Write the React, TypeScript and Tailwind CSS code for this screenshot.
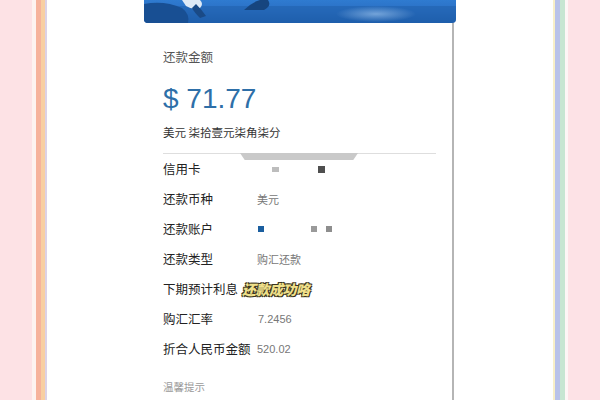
import React from "react";

const font = { fontFamily: '"Noto Sans CJK SC", "Noto Sans", sans-serif' };

function Row({ label, children }: { label: string; children?: React.ReactNode }) {
  return (
    <div className="flex h-[30px] shrink-0 items-center">
      <div className="w-[94px] shrink-0 text-[12.5px] text-[#222]">{label}</div>
      <div className="flex items-center text-[11px] text-[#777]">{children}</div>
    </div>
  );
}

export default function App() {
  return (
    <div className="flex h-[400px] w-[600px] overflow-hidden bg-[#fde3e6]" style={font}>
      <div className="w-[32px] shrink-0 bg-[#fde2e5]" />
      <div className="w-[4px] shrink-0 bg-[#fdf3f0]" />
      <div className="w-[5px] shrink-0 bg-[#f6b39c]" />
      <div className="w-[4px] shrink-0 bg-[#f8cfa2]" />
      <div className="w-[2px] shrink-0 bg-[#dcd2e6]" />
      <div className="flex w-[506px] shrink-0 bg-white pl-[97px]">
        <div className="flex h-[400px] w-[312px] flex-col overflow-hidden">
          <div className="relative h-[23px] w-[312px] shrink-0 overflow-hidden rounded-b-[4px] bg-gradient-to-b from-[#2f7bd0] via-[#2a6fc4] to-[#1e5fb0]">
            <svg className="absolute left-0 top-0" width="312" height="23" viewBox="0 0 312 23">
              <defs>
                <radialGradient id="hl" cx="0.5" cy="0.5" r="0.5">
                  <stop offset="0" stopColor="#a9cdf2" stopOpacity="0.6" />
                  <stop offset="1" stopColor="#a9cdf2" stopOpacity="0" />
                </radialGradient>
              </defs>
              <rect x="0" y="6" width="312" height="17" fill="#1d5ea8" opacity="0.5" />
              <path d="M0 4 Q20 0 38 8 Q46 14 44 23 L0 23 Z" fill="#184f93" />
              <path d="M38 0 L56 0 Q60 4 56 8 Q48 10 42 6 Z" fill="#dfeaf6" />
              <path d="M52 4 Q58 10 62 16 L56 18 Q50 12 48 8 Z" fill="#1a4a86" />
              <path d="M100 10 Q108 2 116 0 L124 0 Q128 6 120 10 Z" fill="#16457f" />
              <ellipse cx="232" cy="14" rx="40" ry="8" fill="url(#hl)" />
            </svg>
          </div>
          <div className="flex w-[310px] flex-1 flex-col border-r-[2px] border-[#b5b5b5] pl-[19px] pr-[16px]">
            <div className="mt-[25px] h-[18px] shrink-0 text-[12.5px] leading-[18px] text-[#555]">还款金额</div>
            <div
              className="mt-[16px] h-[34px] shrink-0 text-[28px] leading-[34px] text-[#2e6fa8]"
              style={{ fontFamily: '"Liberation Sans", Arial, sans-serif' }}
            >
              $ 71.77
            </div>
            <div className="mt-[8px] h-[16px] shrink-0 text-[11.5px] leading-[16px] text-[#333]">美元 柒拾壹元柒角柒分</div>
            <div className="relative mt-[13px] h-px shrink-0 bg-[#dedede]">
              <div className="absolute left-[77px] top-0 h-[7px] w-[118px] bg-[#c9c9c9] [clip-path:polygon(0_0,100%_0,96%_100%,4%_100%)]" />
            </div>
            <Row label="信用卡">
              <span className="ml-[15px] inline-block h-[5px] w-[7px] bg-[#bdbdbd]" />
              <span className="ml-[39px] inline-block h-[7px] w-[7px] bg-[#4f4f4f]" />
            </Row>
            <Row label="还款币种">美元</Row>
            <Row label="还款账户">
              <span className="ml-[1px] inline-block h-[6px] w-[6px] bg-[#1b5e9f]" />
              <span className="ml-[47px] inline-block h-[6px] w-[6px] bg-[#9a9a9a]" />
              <span className="ml-[9px] inline-block h-[6px] w-[6px] bg-[#8e8e8e]" />
            </Row>
            <Row label="还款类型">购汇还款</Row>
            <div className="flex h-[30px] shrink-0 items-center">
              <div className="shrink-0 text-[12.5px] text-[#222]">下期预计利息</div>
              <div className="ml-[4px] text-[14px] font-black italic tracking-[-0.5px] text-[#efe08a] [text-shadow:1px_1px_0_#3a3320,-1px_-1px_0_#3a3320,1px_-1px_0_#3a3320,-1px_1px_0_#3a3320]">
                还款成功咯
              </div>
            </div>
            <Row label="购汇汇率">
              <span className="ml-[1px]" style={{ fontFamily: '"Liberation Sans", Arial, sans-serif' }}>7.2456</span>
            </Row>
            <div className="flex h-[30px] shrink-0 items-center">
              <div className="w-[94px] shrink-0 whitespace-nowrap text-[12.5px] text-[#222]">折合人民币金额</div>
              <span className="text-[11px] text-[#777]" style={{ fontFamily: '"Liberation Sans", Arial, sans-serif' }}>520.02</span>
            </div>
            <div className="mt-[15px] h-[16px] shrink-0 text-[10.5px] leading-[16px] text-[#9a9a9a]">温馨提示</div>
          </div>
        </div>
      </div>
      <div className="w-[2px] shrink-0 bg-[#f8efc8]" />
      <div className="w-[5px] shrink-0 bg-[#b9c2e9]" />
      <div className="w-[5px] shrink-0 bg-[#c6e6d2]" />
      <div className="w-[3px] shrink-0 bg-[#fdf6f6]" />
      <div className="flex-1 bg-[#fde2e6]" />
    </div>
  );
}
